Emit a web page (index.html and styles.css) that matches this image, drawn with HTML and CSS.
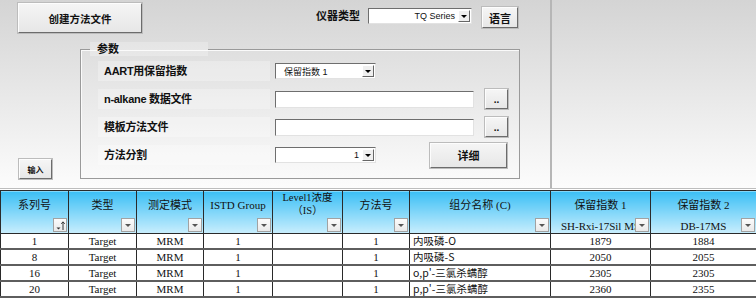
FILE: index.html
```html
<!DOCTYPE html>
<html lang="zh-CN">
<head>
  <meta charset="UTF-8" />
  <title>方法文件</title>
  <link rel="stylesheet" href="styles.css">
</head>
<body>
  <div class="panel">
    <div class="form">
      <div class="toprow">
        <button class="btn btn-create">创建方法文件</button>
        <span class="inst-label">仪器类型</span>
        <div class="combo combo-inst"><span class="val right">TQ Series</span><span class="arrow"></span></div>
        <button class="btn btn-lang">语言</button>
      </div>
      <div class="lower">
        <div class="side-left">
          <button class="btn btn-import">输入</button>
        </div>
        <fieldset class="group">
          <legend>参数</legend>
          <div class="frow">
            <span class="lbl">AART用保留指数</span>
            <div class="combo combo-ri"><span class="val">保留指数 1</span><span class="arrow"></span></div>
          </div>
          <div class="frow">
            <span class="lbl">n-alkane 数据文件</span>
            <div class="txt"></div>
            <button class="btn btn-dots">..</button>
          </div>
          <div class="frow">
            <span class="lbl">模板方法文件</span>
            <div class="txt"></div>
            <button class="btn btn-dots">..</button>
          </div>
          <div class="frow">
            <span class="lbl">方法分割</span>
            <div class="combo combo-ri"><span class="val right">1</span><span class="arrow"></span></div>
            <button class="btn btn-detail">详细</button>
          </div>
        </fieldset>
      </div>
    </div>
    <div class="rest"></div>
  </div>

  <table class="grid">
    <colgroup>
      <col class="w68"><col class="w68"><col class="w67"><col class="w69"><col class="w70">
      <col class="w67"><col class="w141"><col class="w100"><col class="w106">
    </colgroup>
    <thead>
      <tr>
        <th><div class="ht">系列号</div>
          <span class="flt sort"><svg width="11" height="11" viewBox="0 0 11 11"><path d="M1.5 7.5h4l-2 2z" fill="#333"/><path d="M8 10V2M6.3 3.8L8 1.8l1.7 2" stroke="#333" stroke-width="1" fill="none"/></svg></span></th>
        <th><div class="ht">类型</div><span class="flt"></span></th>
        <th><div class="ht">测定模式</div><span class="flt"></span></th>
        <th><div class="ht">ISTD Group</div><span class="flt"></span></th>
        <th><div class="ht two">Level1浓度<br>（IS）</div><span class="flt"></span></th>
        <th><div class="ht">方法号</div><span class="flt"></span></th>
        <th><div class="ht">组分名称 (C)</div><span class="flt"></span></th>
        <th><div class="ht">保留指数 1</div><div class="sub">SH-Rxi-17Sil MS</div><span class="flt"></span></th>
        <th><div class="ht">保留指数 2</div><div class="sub">DB-17MS</div><span class="flt"></span></th>
      </tr>
    </thead>
    <tbody>
      <tr><td>1</td><td>Target</td><td>MRM</td><td>1</td><td></td><td>1</td><td class="name">内吸磷-O</td><td>1879</td><td>1884</td></tr>
      <tr><td>8</td><td>Target</td><td>MRM</td><td>1</td><td></td><td>1</td><td class="name">内吸磷-S</td><td>2050</td><td>2055</td></tr>
      <tr><td>16</td><td>Target</td><td>MRM</td><td>1</td><td></td><td>1</td><td class="name">o,p'-三氯杀螨醇</td><td>2305</td><td>2305</td></tr>
      <tr><td>20</td><td>Target</td><td>MRM</td><td>1</td><td></td><td>1</td><td class="name">p,p'-三氯杀螨醇</td><td>2360</td><td>2355</td></tr>
    </tbody>
  </table>
</body>
</html>
```

FILE: styles.css
```css
* { margin: 0; padding: 0; box-sizing: border-box; }
html, body {
  width: 100%; height: 100%; overflow: hidden;
  background: #fff; color: #111;
  font-family: 'Liberation Sans', 'Noto Sans CJK SC', sans-serif;
}

/* top form panel */
.panel {
  display: flex; height: 189px;
  border-bottom: 1px solid #bdbdbd;
  background: linear-gradient(to bottom, #d4d4d4, #fcfcfc);
}
.form { width: 550px; }
.rest { flex: 1; border-left: 2px solid #b6b6b6; }

.toprow { display: flex; align-items: flex-start; height: 36px; }
.inst-label {
  margin: 9px 0 0 174px; width: 52px;
  font-size: 11px; font-weight: bold; line-height: 14px;
}

.btn {
  display: flex; align-items: center; justify-content: center;
  font: bold 11px 'Liberation Sans', 'Noto Sans CJK SC', sans-serif; color: #111;
  background: linear-gradient(#f5f5f5, #e7e7e7);
  border: 1px solid; border-color: #fdfdfd #6c6c6c #6c6c6c #fdfdfd;
  box-shadow: 0 0 0 1px #bcbcbc;
}
.btn-create { margin: 3px 0 0 18px; width: 124px; height: 30px; font-size: 10.5px; }
.btn-lang { margin: 7px 0 0 10px; width: 36px; height: 21px; }
.btn-import { margin: 123px 0 0 19px; width: 33px; height: 20px; font-size: 8px; }
.btn-dots { margin-left: 11px; width: 23px; height: 20px; align-items: flex-end; padding-bottom: 3px; font-size: 10px; }
.btn-detail { margin-left: 54px; width: 77px; height: 25px; }

.combo {
  display: flex; align-items: center; height: 16px;
  background: #fff; border: 1px solid;
  border-color: #6e6e6e #e2e2e2 #e2e2e2 #6e6e6e;
  font-size: 9px; color: #111;
}
.combo .val { flex: 1; padding: 0 3px 0 8px; white-space: nowrap; }
.combo .val.right { text-align: right; }
.combo .arrow {
  display: flex; align-items: center; justify-content: center;
  width: 12px; height: 12px; margin-right: 1px;
  background: #efefef; border: 1px solid;
  border-color: #fff #666 #666 #fff;
}
.combo .arrow::after {
  content: ''; border-left: 3px solid transparent; border-right: 3px solid transparent;
  border-top: 3px solid #000;
}
.combo-inst { margin-top: 8px; width: 104px; }
.combo-ri { width: 101px; }

.lower { display: flex; }
.side-left { width: 80px; }

.group {
  margin-top: 6px; width: 440px;
  border: 1px solid #9a9a9a; box-shadow: inset 1px 1px 0 #fafafa;
  padding: 1px 0 7px 0;
}
.group legend {
  margin-left: 9px; width: 118px; padding-left: 7px;
  font-size: 11px; font-weight: bold; line-height: 14px;
  background: rgba(255,255,255,0.25);
}
.frow { display: flex; align-items: center; height: 28px; }
.lbl {
  margin-left: 17px; width: 172px; height: 20px; padding-left: 6px;
  font-size: 11px; font-weight: bold; line-height: 20px; letter-spacing: -0.3px;
  background: rgba(255,255,255,0.28);
  margin-right: 5px;
}
.txt {
  width: 199px; height: 17px; background: #fff;
  border: 1px solid; border-color: #6e6e6e #e2e2e2 #e2e2e2 #6e6e6e;
}

/* data grid */
.grid {
  margin-top: 1px; width: 756px;
  border-collapse: collapse; table-layout: fixed;
  font-family: 'Liberation Serif', 'Noto Sans CJK SC', serif; font-size: 11px; color: #111;
}
.w68 { width: 68px; } .w67 { width: 67px; } .w69 { width: 69px; } .w70 { width: 70px; }
.w141 { width: 141px; } .w100 { width: 100px; } .w106 { width: 106px; }

.grid th {
  position: relative; height: 43px; padding: 0;
  vertical-align: top; font-weight: normal; text-align: center;
  border: 1px solid #2a2a2a;
  background: linear-gradient(to bottom, #3bbff5, #c9eefd);
}
.ht { padding-top: 7px; line-height: 14px; white-space: nowrap; }
.ht.two { padding-top: 0; line-height: 13px; font-size: 10.5px; }
.sub { margin-top: 7px; line-height: 14px; white-space: nowrap; overflow: hidden; }

.flt {
  position: absolute; right: 1px; bottom: 1px;
  display: flex; align-items: center; justify-content: center;
  width: 14px; height: 14px;
  background: linear-gradient(#fbfbfb, #e9e9e9); border: 1px solid #a2a2a2;
}
.flt::after {
  content: ''; border-left: 3px solid transparent; border-right: 3px solid transparent;
  border-top: 3px solid #555;
}
.flt.sort::after { display: none; }

.grid td {
  height: 14px; padding: 0; line-height: 14px;
  text-align: center; white-space: nowrap; overflow: hidden;
  border-left: 1px solid #2a2a2a; border-right: 1px solid #2a2a2a;
  border-bottom: 2px solid #5e5e5e;
}
.grid td.name {
  text-align: left; padding-left: 3px;
  font-family: 'Noto Sans CJK SC', sans-serif; font-size: 10.5px;
}
```
